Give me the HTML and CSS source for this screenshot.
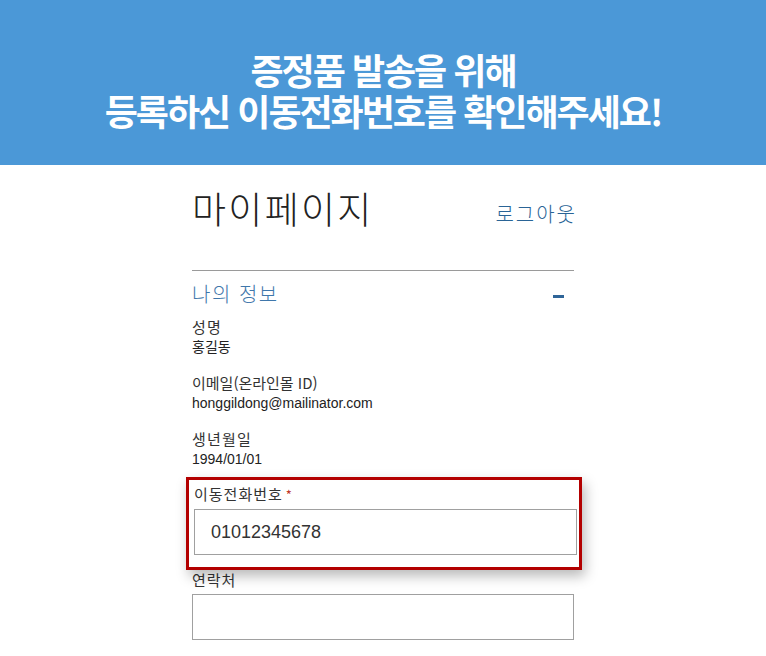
FILE: index.html
```html
<!DOCTYPE html>
<html lang="ko">
<head>
<meta charset="utf-8">
<title>마이페이지</title>
<link rel="stylesheet" href="styles.css">
</head>
<body>
<header class="banner">
  <p class="banner-line">증정품 발송을 위해</p>
  <p class="banner-line">등록하신 이동전화번호를 확인해주세요!</p>
</header>
<main class="page">
  <div class="title-row">
    <h1 class="title">마이페이지</h1>
    <a class="logout" href="#">로그아웃</a>
  </div>
  <section class="section">
    <div class="section-head">
      <h2 class="section-title">나의 정보</h2>
      <span class="collapse-icon"></span>
    </div>
    <div class="info">
      <div class="info-label">성명</div>
      <div class="info-value">홍길동</div>
    </div>
    <div class="info">
      <div class="info-label info-label-tight">이메일(온라인몰 ID)</div>
      <div class="info-value">honggildong@mailinator.com</div>
    </div>
    <div class="info info-last">
      <div class="info-label">생년월일</div>
      <div class="info-value">1994/01/01</div>
    </div>
    <div class="field field-highlight">
      <label class="field-label">이동전화번호<span class="req">*</span></label>
      <div class="input">01012345678</div>
    </div>
    <div class="field">
      <label class="field-label">연락처</label>
      <div class="input"></div>
    </div>
  </section>
</main>
</body>
</html>
```
FILE: styles.css
```css
html, body {
  margin: 0;
  padding: 0;
  background: #fff;
}
body {
  font-family: "Liberation Sans", "Noto Sans CJK KR", sans-serif;
  color: #333;
}
.banner {
  height: 165px;
  box-sizing: border-box;
  padding-top: 49px;
  background: #4b98d7;
  text-align: center;
}
.banner-line {
  margin: 0;
  color: #fff;
  font-family: "Noto Sans CJK KR", sans-serif;
  font-weight: 700;
  font-size: 36px;
  line-height: 41px;
  letter-spacing: -2px;
}
.page {
  width: 382px;
  margin: 0 auto;
  padding-top: 19px;
}
.title-row {
  display: flex;
  justify-content: space-between;
  align-items: baseline;
}
.title {
  margin: 0;
  font-family: "Noto Sans CJK KR", sans-serif;
  font-weight: 300;
  font-size: 37px;
  line-height: 48px;
  color: #222;
  letter-spacing: 2.3px;
}
.logout {
  position: relative;
  top: -2px;
  margin-right: -3px;
  font-family: "Noto Sans CJK KR", sans-serif;
  font-weight: 300;
  font-size: 20px;
  letter-spacing: 2px;
  color: #2a6496;
  text-decoration: none;
}
.section {
  margin-top: 38px;
  border-top: 1px solid #9a9a9a;
  padding-top: 11px;
}
.section-head {
  display: flex;
  justify-content: space-between;
  align-items: center;
  margin-bottom: 11px;
}
.section-title {
  margin: 0;
  font-family: "Noto Sans CJK KR", sans-serif;
  font-weight: 300;
  font-size: 20px;
  line-height: 24px;
  letter-spacing: 1.5px;
  color: #3f77ab;
}
.collapse-icon {
  width: 11px;
  height: 3px;
  margin-right: 10px;
  margin-top: 4px;
  background: #2f6598;
}
.info {
  margin-bottom: 16px;
}
.info-last {
  margin-bottom: 15px;
}
.info-label {
  font-family: "Noto Sans CJK KR", sans-serif;
  font-size: 15px;
  line-height: 20px;
  letter-spacing: 1.2px;
  color: #333;
}
.info-label-tight {
  letter-spacing: 0;
}
.info-value {
  font-size: 14px;
  line-height: 20px;
  color: #222;
}
.field {
  margin-bottom: 15px;
}
.field-label {
  display: block;
  font-family: "Noto Sans CJK KR", sans-serif;
  font-size: 15px;
  line-height: 20px;
  letter-spacing: 1px;
  color: #333;
  margin-bottom: 4px;
}
.req {
  color: #c0392b;
  margin-left: 3px;
  font-size: 13px;
}
.input {
  height: 46px;
  box-sizing: border-box;
  border: 1px solid #a0a0a0;
  padding-left: 16px;
  font-size: 18px;
  line-height: 44px;
  color: #333;
  background: #fff;
}
.field-highlight {
  position: relative;
  z-index: 0;
}
.field-highlight .field-label {
  padding-left: 2px;
}
.field-highlight .input {
  margin-left: 2px;
  margin-right: -3px;
}
.field-highlight::before {
  content: "";
  position: absolute;
  z-index: -1;
  top: -7px;
  bottom: -15px;
  left: -6px;
  right: -8px;
  border: 3px solid #b30000;
  background: #fff;
  box-shadow: 3px 6px 12px rgba(0, 0, 0, 0.28);
}
```
